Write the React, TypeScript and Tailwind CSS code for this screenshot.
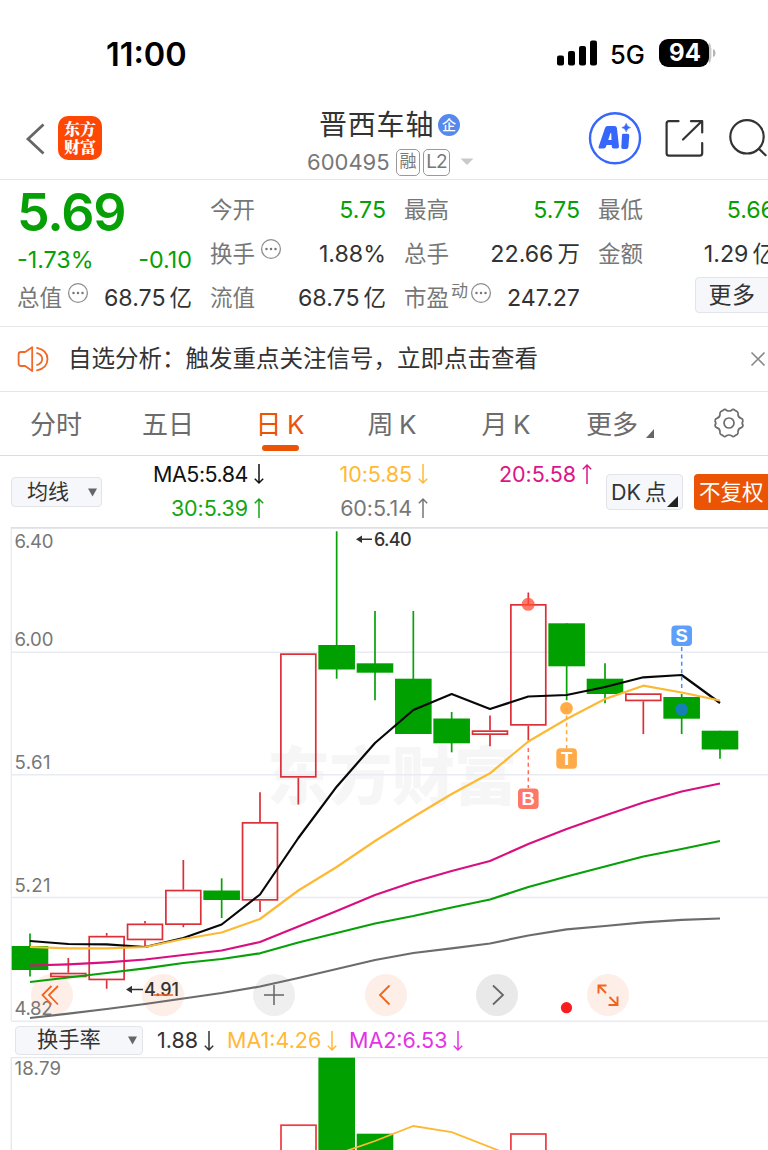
import React from "react";

const SANS = "font-[Inter,'Noto_Sans_CJK_SC',sans-serif]";

/* ---------- small shared pieces ---------- */

function Arrow({ up }: { up?: boolean }) {
  return (
    <svg width="10" height="22" viewBox="0 0 10 22" fill="none" stroke="currentColor" strokeWidth="1.5" className="shrink-0">
      {up ? <path d="M5 21V2M0.8 6.2L5 2L9.2 6.2" /> : <path d="M5 1V20M0.8 15.8L5 20L9.2 15.8" />}
    </svg>
  );
}

function Dots() {
  return (
    <svg width="22" height="22" viewBox="0 0 22 22" className="shrink-0">
      <circle cx="11" cy="11" r="9.4" fill="none" stroke="#8e8e8e" strokeWidth="1.3" />
      <circle cx="6.5" cy="11" r="1.25" fill="#777" />
      <circle cx="11" cy="11" r="1.25" fill="#777" />
      <circle cx="15.5" cy="11" r="1.25" fill="#777" />
    </svg>
  );
}

/* ---------- status bar ---------- */

function StatusBar() {
  return (
    <div className="flex h-24 shrink-0 items-start pl-[106px] pt-[34px]">
      <div className="h-10 w-[450px] text-[32.5px] font-semibold leading-[41px] tracking-[0px] text-black">11:00</div>
      <svg width="42" height="40" viewBox="0 0 42 40" className="shrink-0" fill="#000">
        <rect x="1" y="21.5" width="7" height="10" rx="2" />
        <rect x="12" y="17" width="7" height="14.5" rx="2" />
        <rect x="23" y="12" width="7" height="19.5" rx="2" />
        <rect x="34" y="6.5" width="7" height="25" rx="2" />
      </svg>
      <div className="ml-3 w-[49px] text-[25.5px] font-medium leading-[42px] tracking-[0px] text-black">5G</div>
      <div className="mt-[5px] flex h-[28px] items-center">
        <div className="flex h-[28px] w-[50px] items-center justify-center rounded-[9px] bg-black pl-0.5 text-[24px] font-bold tracking-[0px] text-white">
          94
        </div>
        <svg width="8" height="28" viewBox="0 0 8 28">
          <path d="M0 3Q2.4 6 2.4 10V18Q2.4 22 0 25Z" fill="#c8c8c8" />
          <path d="M4 10Q6.6 11 6.6 14T4 18Z" fill="#b5b5b5" />
        </svg>
      </div>
    </div>
  );
}

/* ---------- title bar ---------- */

function Header() {
  return (
    <div className="flex h-[84px] w-[800px] shrink-0 items-start border-b border-[#e6e6e6]">
      <svg width="22" height="36" viewBox="0 0 22 36" className="ml-[25px] mt-[25px] shrink-0" fill="none" stroke="#666" strokeWidth="2.8">
        <path d="M18.5 3.5L3 18L18.5 32.5" />
      </svg>
      <div className="ml-[11px] mt-5 flex h-[44px] w-[44px] shrink-0 flex-col items-center justify-center rounded-[10px] bg-[#fd4703] font-['Noto_Serif_CJK_SC','Noto_Sans_CJK_SC',sans-serif] text-[16px] font-black leading-[18px] text-white">
        <span>东方</span>
        <span>财富</span>
      </div>
      <div className="ml-[200px] mt-[11px] w-[190px] shrink-0">
        <div className="flex h-9 items-center pl-[17px]">
          <span className="w-[119px] text-[28px] leading-9 tracking-[0.8px] text-[#333]">晋西车轴</span>
          <span className="-mt-px flex h-[22px] w-[22px] items-center justify-center rounded-full bg-[#5689ec] text-[14px] font-medium leading-none text-white">企</span>
        </div>
        <div className="mt-[3px] flex h-[32px] items-center pl-[5px] text-[#777]">
          <span className="w-[89px] text-[22px] tracking-[0px]">600495</span>
          <span className="flex h-[27px] w-[24px] items-center justify-center rounded-[5px] border-[1.5px] border-[#999] text-[17px]">融</span>
          <span className="ml-[3px] flex h-[27px] w-[27px] items-center justify-center rounded-[5px] border-[1.5px] border-[#999] text-[19px] tracking-[-0.8px]">L2</span>
          <svg width="14" height="8" viewBox="0 0 14 8" className="ml-[10px]">
            <path d="M0.5 0.5H13.5L7 7Z" fill="#c9c9c9" />
          </svg>
        </div>
      </div>
      <svg width="54" height="54" viewBox="0 0 54 54" className="ml-[96px] mt-[15px] shrink-0">
        <circle cx="27" cy="27.3" r="25" fill="none" stroke="#3666fa" strokeWidth="2.4" />
        <path d="M19.5 15H26.5Q28.6 15 28.9 17L31 35.5Q31.1 37.5 29 37.5H25.5Q23.8 37.5 23.8 35.8V34H18.6L18 35.8Q17.4 37.5 15.6 37.5H12Q10 37.5 10.8 35.2L17 17Q17.7 15 19.5 15ZM22.5 22L20.2 29H23.5L23.2 22Z" fill="#3666fa" fillRule="evenodd" />
        <path d="M35 22.7H39.5Q41.5 22.7 41.3 24.7L40.4 35.9Q40.2 37.9 38.3 37.9H35Q33.1 37.9 33.3 36L34 24Q34.2 22.7 35 22.7Z" fill="#3666fa" />
        <path d="M38.2 12.2Q39 15.8 42.6 16.6Q39 17.4 38.2 21Q37.4 17.4 33.8 16.6Q37.4 15.8 38.2 12.2Z" fill="#3666fa" stroke="#3666fa" strokeWidth="0.5" />
      </svg>
      <svg width="42" height="42" viewBox="0 0 42 42" className="ml-[22px] mt-[21px] shrink-0" fill="none" stroke="#333" strokeWidth="2.2" strokeLinecap="round" strokeLinejoin="round">
        <path d="M14.5 4.2H5Q2.6 4.2 2.6 6.6V36.3Q2.6 38.7 5 38.7H35.5Q38.2 38.7 38.2 36.2V26" />
        <path d="M19 22.5L37.5 4.5M27 4.2H38.2V15.5" />
      </svg>
      <svg width="44" height="42" viewBox="0 0 44 42" className="ml-[23px] mt-[21px] shrink-0" fill="none" stroke="#333" strokeWidth="2.2" strokeLinecap="round">
        <circle cx="18" cy="19.8" r="16.7" />
        <path d="M30.4 32.2L36.6 38.2" />
      </svg>
    </div>
  );
}

/* ---------- quote summary ---------- */

function Cell({ label, value, unit, green, dots, sup }: { label: string; value: string; unit?: string; green?: boolean; dots?: boolean; sup?: string }) {
  return (
    <div className="flex h-[44px] items-center justify-between">
      <div className="flex items-center text-[22.5px] text-[#777]">
        <span>{label}</span>
        {sup && <span className="-mr-[3px] mb-3 ml-0.5 text-[17px]">{sup}</span>}
        {dots && (
          <span className="mb-[10px] ml-[5px]">
            <Dots />
          </span>
        )}
      </div>
      <div className={green ? "flex items-center text-[22.5px] text-[#06a006]" : "flex items-center text-[22.5px] text-[#333]"}>
        <span className="text-[23.2px]">{value}</span>
        {unit && <span className="ml-1">{unit}</span>}
      </div>
    </div>
  );
}

function Quote() {
  return (
    <div className="grid h-[147px] w-[774px] shrink-0 grid-cols-[175px_176px_176px_177px] gap-x-[18px] border-b border-[#e8e8e8] pl-[17px] pt-[8px]">
      <div>
        <div className="h-[50px] text-[52px] font-semibold leading-[50px] tracking-[-1.2px] text-[#06a006]">5.69</div>
        <div className="flex h-[38px] items-center justify-between pt-[7px] text-[23.3px] text-[#06a006]">
          <span>-1.73%</span>
          <span>-0.10</span>
        </div>
        <Cell label="总值" value="68.75" unit="亿" dots />
      </div>
      <div>
        <Cell label="今开" value="5.75" green />
        <Cell label="换手" value="1.88%" dots />
        <Cell label="流值" value="68.75" unit="亿" />
      </div>
      <div>
        <Cell label="最高" value="5.75" green />
        <Cell label="总手" value="22.66" unit="万" />
        <Cell label="市盈" value="247.27" sup="动" dots />
      </div>
      <div>
        <Cell label="最低" value="5.66" green />
        <Cell label="金额" value="1.29" unit="亿" />
        <div className="ml-[97px] mt-[1px] flex h-[36px] w-[76px] items-center justify-center rounded-[4px] border-[1.5px] border-[#e2e4ea] bg-[#f6f7fa] pr-0.5 text-[23px] tracking-[0.6px] text-[#333]">
          更多
        </div>
      </div>
    </div>
  );
}

/* ---------- notice strip ---------- */

function Notice() {
  return (
    <div className="flex h-[65px] w-[768px] shrink-0 items-center border-b border-[#e6e6e6] pl-[17px]">
      <svg width="34" height="30" viewBox="0 0 34 30" className="shrink-0" fill="none" stroke="#f0692a" strokeWidth="1.8" strokeLinejoin="round" strokeLinecap="round">
        <path d="M15.2 3.2V27L8.2 22H4Q1.6 22 1.6 19.6V10.4Q1.6 8 4 8H8.2Z" />
        <path d="M20 3.8Q30.5 6 30.5 15T20 26.4" />
        <path d="M20 9.2Q25.2 10.8 25.2 15T20 21" />
      </svg>
      <span className="ml-[17px] w-[681px] shrink-0 whitespace-nowrap text-[23.5px] text-[#333]">自选分析：触发重点关注信号，立即点击查看</span>
      <svg width="18" height="18" viewBox="0 0 18 18" className="shrink-0" stroke="#888" strokeWidth="1.6">
        <path d="M2.5 2.5L15.5 15.5M15.5 2.5L2.5 15.5" />
      </svg>
    </div>
  );
}

/* ---------- period tabs ---------- */

const TABS = ["分时", "五日", "日 K", "周 K", "月 K", "更多"];

function Tabs() {
  return (
    <div className="grid h-[64px] w-[784px] shrink-0 grid-cols-7 border-b border-[#dcdce0]">
      {TABS.map((t, i) => (
        <div key={t} className={i === 2 ? "flex flex-col items-center text-[#ea5404]" : "flex flex-col items-center text-[#6c6c6c]"}>
          <div className="relative flex h-[54px] items-center pt-[11px] text-[26px] [word-spacing:-2px]">
            <span className={i === 5 ? "-ml-[8px]" : i === 4 ? "ml-[4px]" : ""}>{t}</span>
            {i === 5 && (
              <svg width="8" height="9" viewBox="0 0 8 9" className="absolute -right-[16px] bottom-[8px]">
                <path d="M8 0V9H0Z" fill="#666" />
              </svg>
            )}
          </div>
          {i === 2 && <div className="-mt-px h-[6px] w-[37px] rounded-full bg-[#ea5404]" />}
        </div>
      ))}
      <div className="flex justify-center pl-[1px] pt-[16px]">
        <svg width="32" height="30" viewBox="0 0 32 30" fill="none" stroke="#6c6c6c" strokeWidth="1.7" strokeLinejoin="round">
          <path d="M10.2 2.2C11.5 1 12.7 1.4 13.3 2.2Q16 3.8 18.7 2.2C19.3 1.4 20.5 1 21.8 2.2L24.4 3.8Q25.4 4.6 25 6.2Q25 9.4 28.2 10.4Q29.8 10.8 29.9 12.4L30 13Q28.4 15 30 17.2L29.9 17.6Q29.8 19 28.2 19.6Q25 20.6 25 23.8Q25.4 25.4 24.4 26.2L21.8 27.8C20.5 29 19.3 28.6 18.7 27.8Q16 26.2 13.3 27.8C12.7 28.6 11.5 29 10.2 27.8L7.6 26.2Q6.6 25.4 7 23.8Q7 20.6 3.8 19.6Q2.2 19 2.1 17.6L2 17.2Q3.6 15 2 13L2.1 12.4Q2.2 10.8 3.8 10.4Q7 9.4 7 6.2Q6.6 4.6 7.6 3.8Z" />
          <circle cx="16" cy="15" r="5" />
        </svg>
      </div>
    </div>
  );
}

/* ---------- moving average legend ---------- */

function Legend({ text, up, color }: { text: string; up?: boolean; color: string }) {
  return (
    <div className={`flex h-[34px] items-center justify-end gap-[6px] text-[21.5px] tracking-[-0.1px] ${color}`}>
      <span>{text}</span>
      <Arrow up={up} />
    </div>
  );
}

function AverageRow() {
  return (
    <div className="flex h-[71px] w-[800px] shrink-0 items-start pl-[11px]">
      <div className="mt-[21px] flex h-[30px] w-[91px] shrink-0 items-center rounded-[4px] border-[1.5px] border-[#e2e4ea] bg-[#f6f7fa] pl-[15px] text-[21px] text-[#333]">
        <span className="w-[61px]">均线</span>
        <svg width="9" height="9" viewBox="0 0 9 9">
          <path d="M0 0.5H9L4.5 8.5Z" fill="#666" />
        </svg>
      </div>
      <div className="mt-px grid w-[493px] shrink-0 grid-cols-[162px_164px_164px]">
        <Legend text="MA5:5.84" color="text-[#111] tracking-[-0.5px]" />
        <Legend text="10:5.85" color="text-[#ffb937]" />
        <Legend text="20:5.58" up color="text-[#dd1588]" />
        <Legend text="30:5.39" up color="text-[#14a514]" />
        <Legend text="60:5.14" up color="text-[#777]" />
      </div>
      <div className="ml-[11px] mt-[18px] flex h-[36px] w-[77px] shrink-0 items-center rounded-[4px] border-[1.5px] border-[#e2e4ea] bg-[#f6f7fa] pl-[4px] text-[21.5px] text-[#333]">
        <span className="w-[56px] whitespace-nowrap [word-spacing:-2px]">DK 点</span>
        <svg width="11" height="11" viewBox="0 0 11 11" className="mt-[19px] shrink-0">
          <path d="M11 0V11H0Z" fill="#222" />
        </svg>
      </div>
      <div className="ml-[11px] mt-[18px] flex h-[36px] w-[90px] shrink-0 items-center rounded-[4px] bg-[#ea5404] pl-[5px] text-[21.5px] text-white">
        不复权
      </div>
    </div>
  );
}

/* ---------- candle chart ---------- */

type Candle = { up: boolean; top: number; bottom: number; high: number; low: number };

const STEP = 38.333;
const cx = (i: number) => 30 + STEP * i;

const CANDLES: Candle[] = [
  { up: false, top: 946, bottom: 970, high: 933.5, low: 976.5 },
  { up: true, top: 972.7, bottom: 977.3, high: 958, low: 977.3 },
  { up: true, top: 935.8, bottom: 980.3, high: 933, low: 988.7 },
  { up: true, top: 923.5, bottom: 940.3, high: 921, low: 946 },
  { up: true, top: 889.7, bottom: 925, high: 860, low: 927.3 },
  { up: false, top: 890.5, bottom: 900, high: 878.3, low: 918 },
  { up: true, top: 822, bottom: 900.7, high: 792.3, low: 912 },
  { up: true, top: 653.3, bottom: 777.7, high: 653.3, low: 804.5 },
  { up: false, top: 645, bottom: 669.5, high: 531.3, low: 678.7 },
  { up: false, top: 663.3, bottom: 672.7, high: 611, low: 700.3 },
  { up: false, top: 678.7, bottom: 734, high: 611, low: 734 },
  { up: false, top: 718.5, bottom: 743.3, high: 712, low: 752.3 },
  { up: true, top: 730.3, bottom: 735, high: 715.5, low: 746.3 },
  { up: true, top: 604, bottom: 725.7, high: 592.5, low: 740.5 },
  { up: false, top: 623.3, bottom: 666.3, high: 623.3, low: 700.3 },
  { up: false, top: 678.7, bottom: 694, high: 663.3, low: 703.3 },
  { up: true, top: 693.3, bottom: 701.3, high: 693.3, low: 734 },
  { up: false, top: 697, bottom: 718.7, high: 694, low: 734 },
  { up: false, top: 730.7, bottom: 749.5, high: 730.7, low: 758.7 },
];

const MA5 = [941, 944, 944.3, 947, 938, 924.5, 894.5, 838, 786.7, 743, 710, 694, 709, 696.5, 695, 687, 677.3, 675, 703];
const MA10 = [947, 948.3, 948.3, 947, 939, 932.5, 919, 890.5, 867, 841, 817, 794, 773.3, 741.5, 719, 699, 685.7, 692.5, 700.5];
const MA20 = [965.5, 964.3, 962.3, 959.5, 955, 950.5, 942, 926.5, 911, 895, 882, 871, 861, 844, 829, 815.5, 802.5, 791.5, 783.5];
const MA30 = [982, 977.5, 973, 968.3, 963, 959, 953.3, 942.5, 933, 923.5, 916, 907.5, 899.5, 887, 876.5, 866.5, 856.5, 849, 841];
const MA60 = [1018, 1013.7, 1009, 1004, 998.5, 993, 986.5, 978, 969, 960, 953, 948.3, 943.5, 935.5, 929.3, 926, 922.3, 919.8, 918.5];

const pts = (v: number[]) => v.map((y, i) => `${cx(i)},${y}`).join(" ");

function CandleMark({ c, i }: { c: Candle; i: number }) {
  const x = cx(i);
  const w = 36.6;
  if (c.up) {
    return (
      <g stroke="#dc3038" strokeWidth="1.7" fill="none">
        <path d={`M${x} ${c.high}V${c.top}M${x} ${c.bottom}V${c.low}`} />
        <rect x={x - w / 2 + 0.85} y={c.top + 0.85} width={w - 1.7} height={c.bottom - c.top - 1.7} />
      </g>
    );
  }
  return (
    <g fill="#00a000">
      <path d={`M${x} ${c.high}V${c.low}`} stroke="#08a208" strokeWidth="1.7" />
      <rect x={x - w / 2} y={c.top} width={w} height={c.bottom - c.top} />
    </g>
  );
}

function Badge({ x, y, fill, letter }: { x: number; y: number; fill: string; letter: string }) {
  return (
    <g>
      <rect x={x - 10.3} y={y - 10.3} width="20.6" height="20.6" rx="4" fill={fill} />
      <text x={x} y={y + 6.6} textAnchor="middle" fontSize="18.5" fontWeight="700" fill="#fff" fontFamily="Liberation Sans">
        {letter}
      </text>
    </g>
  );
}

const ROUND = [
  { bg: "bg-[#fdeee7]", color: "#f0641e", w: 1.8, d: "M20.5 12L11.5 21L20.5 30.5M27 12L18 21L27 30.5" },
  { bg: "bg-[#fdeee7]", color: "#f0641e", w: 1.5, d: "M11.5 21H31" },
  { bg: "bg-[#efefef]", color: "#666", w: 1.5, d: "M11 21H31M21 11V31" },
  { bg: "bg-[#fdeee7]", color: "#f0641e", w: 1.8, d: "M24.5 11.5L15 21L24.5 30.5" },
  { bg: "bg-[#e9e9e9]", color: "#666", w: 1.8, d: "M17 11.5L27 21L17 30.5" },
  { bg: "bg-[#fdeee7]", color: "#f0641e", w: 1.9, d: "M19 19L11.5 11.5M11.5 19.5V11.5H19.5M22.5 23L30.5 31M30.5 22.5V31H21.5" },
];

function PriceChart() {
  return (
    <div className="relative h-[495px] w-[768px] shrink-0 overflow-hidden">
      <div className="absolute left-[30.5px] top-[446.5px] z-0 flex gap-[69.4px]">
        {ROUND.map((b, i) => (
          <div key={i} className={`h-[42px] w-[42px] rounded-full ${b.bg}`} />
        ))}
      </div>
      <svg width="768" height="495" viewBox="0 527 768 495" className="relative block">
        <text x="267" y="799" fontSize="63" textLength="250" fontWeight="900" fill="#777" opacity="0.06" fontFamily="Noto Sans CJK SC, sans-serif">
          东方财富
        </text>
        <g stroke="#e9ebf3" strokeWidth="1.4">
          <path d="M11.3 527V1021M11.3 652.2H768M11.3 774.8H768M11.3 897.5H768M11.3 1021.3H768" fill="none" />
          <path d="M11 527.9H768" stroke="#dddfe5" strokeWidth="1.8" />
        </g>
        <g fontSize="18.6" fill="#777" fontFamily="Inter, sans-serif">
          <text x="14.5" y="548.2" textLength="39">6.40</text>
          <text x="14.5" y="645.5" textLength="39">6.00</text>
          <text x="14.5" y="769" textLength="36">5.61</text>
          <text x="14.5" y="892" textLength="36">5.21</text>
          <text x="14.5" y="1014.8" textLength="38">4.82</text>
        </g>
        {CANDLES.map((c, i) => (
          <CandleMark key={i} c={c} i={i} />
        ))}
        <g fill="none" strokeWidth="2.2" strokeLinejoin="round">
          <polyline points={pts(MA5)} stroke="#080808" />
          <polyline points={pts(MA10)} stroke="#fdb933" />
          <polyline points={pts(MA20)} stroke="#d8107f" />
          <polyline points={pts(MA30)} stroke="#08a008" />
          <polyline points={pts(MA60)} stroke="#6c6c6c" />
        </g>
        <g fontSize="18" fontWeight="500" fill="#333" fontFamily="Inter, sans-serif">
          <text x="374" y="546.2" textLength="37.5">6.40</text>
          <text x="144" y="996.2" textLength="35">4.91</text>
          <path d="M358 539.3H372M128 989.5H143" stroke="#333" strokeWidth="1.6" />
          <path d="M356 539.3L362 535.6V543Z M126 989.5L132 985.8V993.2Z" />
        </g>
        <circle cx="528.2" cy="604.3" r="6.5" fill="#ff4c38" opacity="0.75" />
        <circle cx="566.5" cy="708.3" r="6.3" fill="#ff9a1e" opacity="0.82" />
        <circle cx="681.7" cy="709.5" r="6.3" fill="#1480b4" />
        <g strokeWidth="1.5" strokeDasharray="4 3.4" fill="none">
          <path d="M528.3 748V788" stroke="#ff6a5a" />
          <path d="M566.6 708V748" stroke="#ffa53a" />
          <path d="M681.7 647V688" stroke="#4390fa" />
        </g>
        <Badge x={528.3} y={798.7} fill="#ff7765" letter="B" />
        <Badge x={566.6} y={758.5} fill="#ffaa48" letter="T" />
        <Badge x={681.7} y={635.8} fill="#5e9ffc" letter="S" />
        <circle cx="566.5" cy="1007.7" r="5.6" fill="#f81e20" />
      </svg>
      <div className="absolute left-[30.5px] top-[446.5px] flex gap-[69.4px]">
        {ROUND.map((b, i) => (
          <svg key={i} width="42" height="42" viewBox="0 0 42 42" fill="none" stroke={b.color} strokeWidth={b.w}>
            <path d={b.d} />
          </svg>
        ))}
      </div>
    </div>
  );
}

/* ---------- turnover indicator ---------- */

function TurnoverRow() {
  return (
    <div className="flex h-[35px] w-[768px] shrink-0 items-center pl-[15px] text-[21.5px]">
      <div className="mt-px flex h-[29px] w-[128px] shrink-0 items-center rounded-[4px] border-[1.5px] border-[#e2e4ea] bg-[#f6f7fa] pl-[21px] text-[21.3px] text-[#333]">
        <span className="w-[91px]">换手率</span>
        <svg width="9" height="9" viewBox="0 0 9 9">
          <path d="M0 0.5H9L4.5 8.5Z" fill="#666" />
        </svg>
      </div>
      <div className="ml-[14px] mt-0.5 flex w-[70px] shrink-0 items-center gap-[6px] text-[#333]">
        <span>1.88</span>
        <Arrow />
      </div>
      <div className="mt-0.5 flex w-[122px] shrink-0 items-center gap-[6px] text-[#ffb937]">
        <span>MA1:4.26</span>
        <Arrow />
      </div>
      <div className="mt-0.5 flex items-center gap-[6px] text-[#e233e6]">
        <span>MA2:6.53</span>
        <Arrow />
      </div>
    </div>
  );
}

function TurnoverChart() {
  return (
    <svg width="768" height="93" viewBox="0 1057 768 93" className="block shrink-0">
      <path d="M11.3 1057V1150M11 1057.5H768" stroke="#e6e8ef" strokeWidth="1.4" fill="none" />
      <text x="14.5" y="1075" fontSize="18.6" textLength="46.5" fill="#777" fontFamily="Inter, sans-serif">
        18.79
      </text>
      <g fill="none" stroke="#ee3a40" strokeWidth="1.7">
        <rect x="281" y="1125.2" width="35" height="40" />
        <rect x="510.9" y="1134" width="35" height="40" />
      </g>
      <rect x="318.4" y="1057.7" width="36.6" height="93" fill="#00a000" />
      <rect x="356.7" y="1133.7" width="36.6" height="20" fill="#00a000" />
      <path d="M346 1151L375 1141L413.3 1126L451.7 1132.2L500 1151" fill="none" stroke="#fdb933" strokeWidth="1.8" />
    </svg>
  );
}

export default function App() {
  return (
    <div className={`flex h-[1150px] w-[768px] flex-col overflow-hidden bg-white ${SANS}`}>
      <StatusBar />
      <Header />
      <Quote />
      <Notice />
      <Tabs />
      <AverageRow />
      <PriceChart />
      <TurnoverRow />
      <TurnoverChart />
    </div>
  );
}
